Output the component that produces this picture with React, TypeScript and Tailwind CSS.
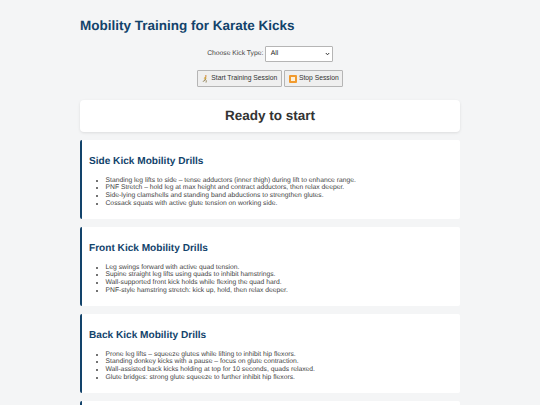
const drills = [
  {
    title: 'Side Kick Mobility Drills',
    items: [
      'Standing leg lifts to side – tense adductors (inner thigh) during lift to enhance range.',
      'PNF Stretch – hold leg at max height and contract adductors, then relax deeper.',
      'Side-lying clamshells and standing band abductions to strengthen glutes.',
      'Cossack squats with active glute tension on working side.',
    ],
  },
  {
    title: 'Front Kick Mobility Drills',
    items: [
      'Leg swings forward with active quad tension.',
      'Supine straight leg lifts using quads to inhibit hamstrings.',
      'Wall-supported front kick holds while flexing the quad hard.',
      'PNF-style hamstring stretch: kick up, hold, then relax deeper.',
    ],
  },
  {
    title: 'Back Kick Mobility Drills',
    items: [
      'Prone leg lifts – squeeze glutes while lifting to inhibit hip flexors.',
      'Standing donkey kicks with a pause – focus on glute contraction.',
      'Wall-assisted back kicks holding at top for 10 seconds, quads relaxed.',
      'Glute bridges: strong glute squeeze to further inhibit hip flexors.',
    ],
  },
];

const RunnerIcon = () => (
  <svg width="7" height="8" viewBox="0 0 7 8" className="shrink-0">
    <circle cx="3.8" cy="1" r="0.9" fill="#d9a066" />
    <path d="M3.4 2 L3 4.6" stroke="#c9a227" strokeWidth="1.4" fill="none" />
    <path d="M3 4.4 L4.4 5.6 L4 7.6 M3 4.6 L2.2 6 L0.8 6.4" stroke="#8a7a4a" strokeWidth="0.8" fill="none" />
    <path d="M3.4 2.4 L1.8 3.4 M3.4 2.4 L5 3.4" stroke="#d9a066" strokeWidth="0.6" fill="none" />
  </svg>
);

const StopIcon = () => (
  <div className="w-[8px] h-[8px] shrink-0 rounded-[1px] bg-[#f19a2e] flex items-center justify-center">
    <div className="w-[4px] h-[4px] bg-[#fdf0d8]" />
  </div>
);

export default function App() {
  return (
    <div className="h-[405px] overflow-hidden bg-[#f4f5f6] font-['Liberation_Sans',Arial,sans-serif] [text-rendering:geometricPrecision]">
      <div className="w-[380px] mx-auto pt-[16px]">
        <h1 className="text-[13.5px] leading-[20px] font-bold text-[#12436b]">
          Mobility Training for Karate Kicks
        </h1>

        <div className="mt-[10px] flex items-center justify-center gap-[1.5px]">
          <label className="text-[6.75px] text-[#444444]">Choose Kick Type:</label>
          <div className="w-[68px] h-[16px] bg-white border border-[#b5b5b5] rounded-[1px] flex items-center justify-between pl-[5px] pr-[2px]">
            <span className="text-[6.75px] text-[#222222]">All</span>
            <svg width="5" height="4" viewBox="0 0 5 4">
              <path d="M0.8 1 L2.5 2.8 L4.2 1" stroke="#222222" strokeWidth="0.9" fill="none" />
            </svg>
          </div>
        </div>

        <div className="mt-[8px] flex justify-center gap-[2px]">
          <button className="h-[17px] px-[4px] flex items-center gap-[2.5px] bg-[#efefef] border border-[#b5b5b5] rounded-[1px] text-[6.75px] text-[#333333]">
            <RunnerIcon />
            Start Training Session
          </button>
          <button className="h-[17px] px-[3.5px] flex items-center gap-[2px] bg-[#efefef] border border-[#b5b5b5] rounded-[1px] text-[6.75px] text-[#333333]">
            <StopIcon />
            Stop Session
          </button>
        </div>

        <div className="mt-[13px] h-[32px] bg-white rounded-[4px] shadow-[0_1px_3px_rgba(0,0,0,0.1)] flex items-center justify-center">
          <h2 className="text-[13.5px] font-bold text-[#333333]">Ready to start</h2>
        </div>

        <div className="mt-[8px] flex flex-col gap-[8px]">
          {drills.map(drill => (
            <section
              key={drill.title}
              className="h-[79px] shrink-0 bg-white border-l-[2px] border-[#12436b] rounded-[2px] pl-[7px] pt-[15px]"
            >
              <h3 className="text-[10.1px] leading-[14px] font-bold text-[#12436b]">{drill.title}</h3>
              <ul className="mt-[7.5px] pl-[16.5px] list-disc text-[6.75px] leading-[7.7px] text-[#444444]">
                {drill.items.map(item => (
                  <li key={item}>{item}</li>
                ))}
              </ul>
            </section>
          ))}
          {/* next card only peeks in at the bottom */}
          <section className="h-[79px] shrink-0 bg-white border-l-[2px] border-[#12436b] rounded-[2px]" />
        </div>
      </div>
    </div>
  );
}
